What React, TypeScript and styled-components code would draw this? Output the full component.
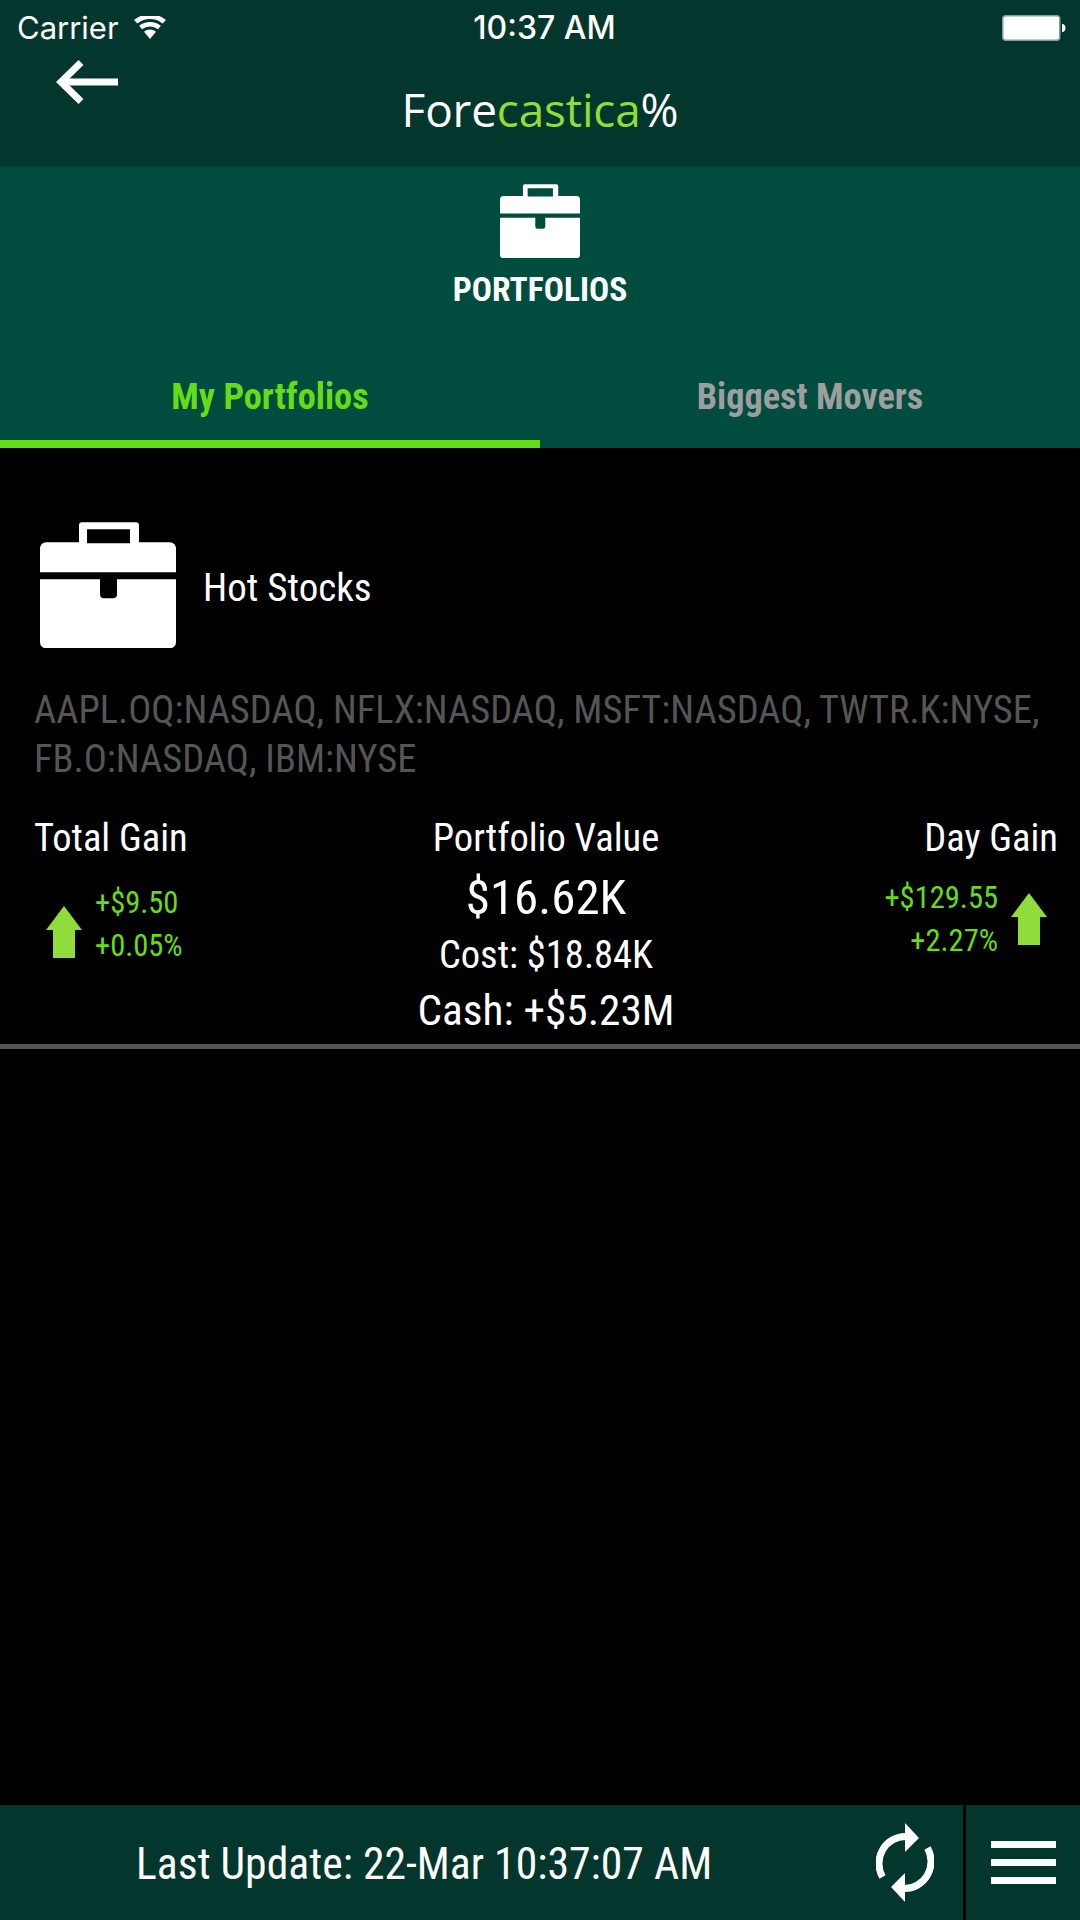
import styled, { createGlobalStyle } from "styled-components";

const GlobalStyle = createGlobalStyle`
    html, body {
        margin: 0;
        padding: 0;
        background: #000;
    }
`;

const condensed = `"Roboto Condensed", "Liberation Sans Narrow", Roboto, sans-serif`;

const Page = styled.div`
    width: 1080px;
    height: 1920px;
    display: flex;
    flex-direction: column;
    background: #000;
    color: #fff;
    font-family: ${condensed};
    font-stretch: condensed;
    overflow: hidden;
`;

const TopBar = styled.header`
    height: 167px;
    flex: none;
    background: #03362c;
    display: flex;
    flex-direction: column;
`;

const StatusBar = styled.div`
    height: 40px;
    padding: 8px 14px 0 17px;
    box-sizing: border-box;
    display: grid;
    grid-template-columns: 1fr auto 1fr;
    align-items: center;
    font-family: Inter, Roboto, sans-serif;
    font-stretch: normal;
    font-size: 31px;
`;

const Carrier = styled.div`
    display: flex;
    align-items: center;
    gap: 15px;
`;

const Clock = styled.div`
    font-size: 32px;
    font-weight: 500;
    padding-left: 6px;
`;

const Battery = styled.div`
    justify-self: end;
    display: flex;
`;

const NavRow = styled.div`
    position: relative;
    flex: 1;
    display: flex;
    justify-content: center;
    padding-top: 43px;
`;

const BackButton = styled.div`
    position: absolute;
    left: 56px;
    top: 20px;
    display: flex;
`;

const Logo = styled.div`
    font-family: "Open Sans", sans-serif;
    font-stretch: normal;
    font-size: 46px;
    line-height: 52px;
    letter-spacing: -0.2px;
`;

const LogoAccent = styled.span`
    color: #8fdc3a;
`;

const SectionHead = styled.section`
    height: 281px;
    flex: none;
    background: #004d40;
    display: flex;
    flex-direction: column;
`;

const SectionTitle = styled.div`
    flex: 1;
    display: flex;
    flex-direction: column;
    align-items: center;
    padding-top: 17px;
    font-size: 33.500px;
    font-weight: 700;
    gap: 12px;
`;

const Tabs = styled.div`
    height: 105px;
    display: grid;
    grid-template-columns: 1fr 1fr;
`;

const Tab = styled.div<{ $active?: boolean }>`
    display: flex;
    align-items: center;
    justify-content: center;
    padding-top: 10px;
    font-size: 36.300px;
    font-weight: 700;
    color: ${p => (p.$active ? "#64dd17" : "#9e9e9e")};
    border-bottom: 8px solid ${p => (p.$active ? "#64dd17" : "transparent")};
    box-sizing: border-box;
`;

const Portfolio = styled.section`
    height: 601px;
    flex: none;
    box-sizing: border-box;
    padding: 74px 22px 0 34px;
    border-bottom: 5px solid #555;
    display: flex;
    flex-direction: column;
`;

const NameRow = styled.div`
    display: flex;
    align-items: center;
    gap: 27px;
    padding-left: 6px;
    font-size: 39px;
`;

const PortfolioName = styled.div`
    padding-top: 6px;
`;

const Tickers = styled.div`
    margin-top: 37px;
    font-size: 38.500px;
    line-height: 49px;
    color: #555;
    white-space: nowrap;
`;

const Stats = styled.div`
    margin-top: 33px;
    display: grid;
    grid-template-columns: 1fr auto 1fr;
`;

const Label = styled.div`
    font-size: 38.500px;
    line-height: 44px;
`;

const GainCol = styled.div<{ $right?: boolean }>`
    display: flex;
    flex-direction: column;
    align-items: ${p => (p.$right ? "flex-end" : "flex-start")};
`;

const GainRow = styled.div<{ $right?: boolean }>`
    display: flex;
    align-items: center;
    gap: 13px;
    margin-top: ${p => (p.$right ? 16 : 21)}px;
    padding: ${p => (p.$right ? "0 11px 0 0" : "0 0 0 12px")};
`;

const GainValues = styled.div<{ $right?: boolean }>`
    display: flex;
    flex-direction: column;
    text-align: ${p => (p.$right ? "right" : "left")};
    font-size: 30.500px;
    line-height: 43px;
    color: #64dd17;
`;

const ArrowBox = styled.div<{ $drop?: boolean }>`
    display: flex;
    margin-top: ${p => (p.$drop ? 16 : 0)}px;
`;

const ValueCol = styled.div`
    display: flex;
    flex-direction: column;
    align-items: center;
`;

const BigValue = styled.div`
    font-size: 49px;
    line-height: 54px;
    margin-top: 11px;
`;

const CostLine = styled.div`
    font-size: 38.500px;
    line-height: 60px;
`;

const CashLine = styled.div`
    font-size: 43.300px;
    line-height: 52px;
`;

const Spacer = styled.div`
    flex: 1;
`;

const BottomBar = styled.footer`
    height: 115px;
    flex: none;
    background: #03362c;
    display: flex;
    align-items: stretch;
`;

const LastUpdate = styled.div`
    flex: 1;
    display: flex;
    align-items: center;
    padding: 3px 0 0 136px;
    font-size: 43.700px;
`;

const RefreshButton = styled.div`
    width: 87px;
    display: flex;
    align-items: center;
    justify-content: flex-start;
`;

const MenuButton = styled.div`
    width: 117px;
    border-left: 3px solid #000;
    box-sizing: border-box;
    display: flex;
    align-items: center;
    justify-content: center;
`;

const WifiIcon = () => (
    <svg width="32" height="23" viewBox="0 0 32 23" fill="#fff">
        <path d="M16 23l-6-7.200a9 9 0 0 1 12 0z" />
        <path d="M8 13.200a13 13 0 0 1 16 0l2.800-3.400a17.500 17.500 0 0 0-21.600 0z" />
        <path d="M3.500 7.400a20 20 0 0 1 25 0L32 4a25 25 0 0 0-32 0z" />
    </svg>
);

const BatteryIcon = () => (
    <svg width="64" height="26" viewBox="0 0 64 26">
        <rect x="0.750" y="0.750" width="57" height="24.500" rx="3" fill="#fff" stroke="#7fa39b" strokeWidth="1.500" />
        <path d="M60 9c2.500 0 3.500 2 3.500 4s-1 4-3.500 4z" fill="#fff" />
    </svg>
);

const BackIcon = () => (
    <svg width="64" height="44" viewBox="0 0 64 44" fill="none" stroke="#fff" strokeWidth="7">
        <path d="M62 22H6" />
        <path d="M25 2.500L5 22l20 19.500" />
    </svg>
);

const BriefcaseIcon = ({ width }: { width: number }) => (
    <svg width={width} height={width * 0.93} viewBox="0 0 136 126" fill="#fff">
        <path fillRule="evenodd" d="M39 20V3a3 3 0 0 1 3-3h54a3 3 0 0 1 3 3v17h31a6 6 0 0 1 6 6v24H0V26a6 6 0 0 1 6-6zM47 7v14h43V7z" />
        <path d="M0 57h60v15a4 4 0 0 0 4 4h9a4 4 0 0 0 4-4V57h59v63a6 6 0 0 1-6 6H6a6 6 0 0 1-6-6z" />
    </svg>
);

const UpArrow = () => (
    <svg width="36" height="52" viewBox="0 0 36 52" fill="#8fdc3a">
        <path d="M18 0l18 24H29v28H7V24H0z" />
    </svg>
);

const RefreshIcon = () => (
    <svg width="58" height="80" viewBox="0 0 58 80">
        <g>
            <path d="M6.500 54A26.500 27 0 0 1 30 13.500" fill="none" stroke="#fff" strokeWidth="7" />
            <path d="M29 0l14 15-14 14z" fill="#fff" />
        </g>
        <g transform="rotate(180 29 39.500)">
            <path d="M6.500 54A26.500 27 0 0 1 30 13.500" fill="none" stroke="#fff" strokeWidth="7" />
            <path d="M29 0l14 15-14 14z" fill="#fff" />
        </g>
    </svg>
);

const MenuIcon = () => (
    <svg width="65" height="43" viewBox="0 0 65 43" fill="#fff">
        <rect width="65" height="7" />
        <rect y="18" width="65" height="7" />
        <rect y="36" width="65" height="7" />
    </svg>
);

const App = () =>
{
    return (
        <Page>
            <GlobalStyle />
            <TopBar>
                <StatusBar>
                    <Carrier>Carrier <WifiIcon /></Carrier>
                    <Clock>10:37 AM</Clock>
                    <Battery><BatteryIcon /></Battery>
                </StatusBar>
                <NavRow>
                    <BackButton><BackIcon /></BackButton>
                    <Logo>Fore<LogoAccent>castica</LogoAccent>%</Logo>
                </NavRow>
            </TopBar>
            <SectionHead>
                <SectionTitle>
                    <BriefcaseIcon width={80} />
                    <div>PORTFOLIOS</div>
                </SectionTitle>
                <Tabs>
                    <Tab $active>My Portfolios</Tab>
                    <Tab>Biggest Movers</Tab>
                </Tabs>
            </SectionHead>
            <Portfolio>
                <NameRow>
                    <BriefcaseIcon width={136} />
                    <PortfolioName>Hot Stocks</PortfolioName>
                </NameRow>
                <Tickers>
                    AAPL.OQ:NASDAQ, NFLX:NASDAQ, MSFT:NASDAQ, TWTR.K:NYSE,
                    <br />
                    FB.O:NASDAQ, IBM:NYSE
                </Tickers>
                <Stats>
                    <GainCol>
                        <Label>Total Gain</Label>
                        <GainRow>
                            <ArrowBox $drop><UpArrow /></ArrowBox>
                            <GainValues>
                                <div>+$9.50</div>
                                <div>+0.05%</div>
                            </GainValues>
                        </GainRow>
                    </GainCol>
                    <ValueCol>
                        <Label>Portfolio Value</Label>
                        <BigValue>$16.62K</BigValue>
                        <CostLine>Cost: $18.84K</CostLine>
                        <CashLine>Cash: +$5.23M</CashLine>
                    </ValueCol>
                    <GainCol $right>
                        <Label>Day Gain</Label>
                        <GainRow $right>
                            <GainValues $right>
                                <div>+$129.55</div>
                                <div>+2.27%</div>
                            </GainValues>
                            <ArrowBox><UpArrow /></ArrowBox>
                        </GainRow>
                    </GainCol>
                </Stats>
            </Portfolio>
            <Spacer />
            <BottomBar>
                <LastUpdate>Last Update: 22-Mar 10:37:07 AM</LastUpdate>
                <RefreshButton><RefreshIcon /></RefreshButton>
                <MenuButton><MenuIcon /></MenuButton>
            </BottomBar>
        </Page>
    );
}

export default App;
